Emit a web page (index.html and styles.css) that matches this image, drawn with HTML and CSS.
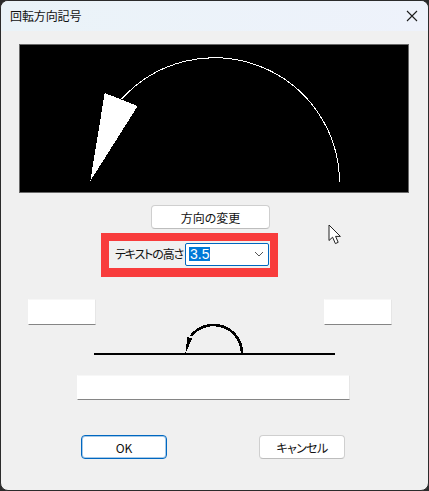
FILE: index.html
```html
<!DOCTYPE html>
<html lang="ja">
<head>
<meta charset="utf-8">
<title>回転方向記号</title>
<link rel="stylesheet" href="styles.css">
</head>
<body>
<div class="window">
  <header class="titlebar">
    <span class="title">回転方向記号</span>
    <svg class="close" width="12" height="12" viewBox="0 0 12 12"><path d="M1 1 L11 11 M11 1 L1 11" stroke="#1c1c1c" stroke-width="1.1" fill="none"/></svg>
  </header>
  <div class="canvas">
    <svg width="388" height="147" viewBox="20 45 388 147" shape-rendering="crispEdges">
      <path d="M339.5 182.5 A125 125 0 0 0 121.7 99" fill="none" stroke="#fff" stroke-width="1"/>
      <polygon points="104.7,93 137.7,106 90.3,181" fill="#fff"/>
    </svg>
  </div>
  <button class="btn change">方向の変更</button>
  <div class="height-row">
    <span class="label">テキストの高さ</span>
    <div class="select">
      <span class="selected">3.5</span>
      <svg class="chevron" width="10" height="6" viewBox="0 0 10 6"><path d="M1 1 L5 5 L9 1" fill="none" stroke="#555" stroke-width="1"/></svg>
    </div>
  </div>
  <div class="inputs">
    <div class="field small"></div>
    <div class="field small"></div>
  </div>
  <svg class="preview" width="241" height="33" viewBox="94 323 241 33" shape-rendering="crispEdges">
    <path d="M94 354 H335" stroke="#000" stroke-width="2" fill="none"/>
    <path d="M242 354 V353.5 A28.5 28.5 0 0 0 191 336" stroke="#000" stroke-width="2.6" fill="none"/>
    <polygon points="185.3,353.5 187.3,337 192.3,338.3" fill="#000"/>
  </svg>
  <div class="field wide"></div>
  <div class="actions">
    <button class="btn action default">OK</button>
    <button class="btn action cancel">キャンセル</button>
  </div>
  <svg class="cursor" width="14" height="22" viewBox="0 0 14 22"><path d="M1 1 V16.5 L4.6 13.2 L7.4 19.6 L10.2 18.3 L7.6 12.4 L12.4 12.4 Z" fill="#fff" stroke="#222" stroke-width="1" stroke-linejoin="miter"/></svg>
</div>
</body>
</html>
```

FILE: styles.css
```css
* {
  box-sizing: border-box;
}

html,
body {
  margin: 0;
  padding: 0;
  background: #2b2b2b;
}

body {
  width: 429px;
  height: 491px;
  overflow: hidden;
  font-family: "Noto Sans CJK JP", "Noto Sans", sans-serif;
  font-size: 12px;
  font-feature-settings: "palt";
  color: #111;
}

.window {
  position: relative;
  display: flex;
  flex-direction: column;
  align-items: flex-start;
  width: 429px;
  height: 491px;
  background: #f0f0f0;
  border: 1px solid #2b2b2b;
  border-radius: 8px;
  overflow: hidden;
}

.titlebar {
  display: flex;
  align-items: center;
  justify-content: space-between;
  width: 100%;
  height: 30px;
  flex: none;
  padding: 0 10px 0 9px;
  background: linear-gradient(90deg, #eaf3f8, #eef2fb);
}

.title {
  font-size: 12px;
  line-height: 16px;
  letter-spacing: -0.1px;
}

.close {
  display: block;
}

.canvas {
  width: 390px;
  height: 149px;
  margin: 13px 0 0 18px;
  flex: none;
  background: #000;
  border: 1px solid #696969;
}

.canvas svg {
  display: block;
}

.btn {
  display: block;
  flex: none;
  padding: 0;
  font: inherit;
  color: #111;
  background: #fff;
  border: 1px solid #cfcfcf;
  border-bottom-color: #bdbdbd;
  border-radius: 4px;
}

.change {
  width: 119px;
  height: 24px;
  margin: 12px 0 0 150px;
}

.height-row {
  display: flex;
  align-items: center;
  justify-content: space-between;
  width: 177px;
  height: 44px;
  margin: 4px 0 0 100px;
  flex: none;
  padding: 0 1px 1px 6px;
  background: #f0f0f0;
  border: 8px solid #f83c3c;
  border-bottom-width: 9px;
}

.label {
  line-height: 16px;
  letter-spacing: -1.15px;
  white-space: nowrap;
}

.select {
  display: flex;
  align-items: center;
  justify-content: space-between;
  width: 84px;
  height: 23px;
  flex: none;
  padding: 0 4px 0 3px;
  background: #fff;
  border: 1px solid #0067c0;
  border-radius: 2px;
}

.selected {
  padding: 0 1px;
  font-family: "Liberation Sans", sans-serif;
  font-size: 14px;
  line-height: 14px;
  color: #fff;
  background: #0078d7;
}

.chevron {
  display: block;
}

.inputs {
  display: flex;
  justify-content: space-between;
  width: 364px;
  margin: 22px 0 0 27px;
  flex: none;
}

.field {
  flex: none;
  background: #fff;
  border: 1px solid #fff;
  border-top-color: #f7f7f7;
  border-right-color: #e6e6e6;
  border-bottom-color: #858585;
}

.small {
  width: 68px;
  height: 26px;
}

.preview {
  display: block;
  flex: none;
  margin: -2px 0 0 93px;
}

.wide {
  width: 273px;
  height: 25px;
  margin: 19px 0 0 76px;
}

.actions {
  display: flex;
  justify-content: space-between;
  width: 264px;
  margin: 35px 0 0 80px;
  flex: none;
}

.action {
  width: 86px;
  height: 24px;
}

.cancel {
  letter-spacing: -0.6px;
}

.default {
  border: 1px solid #0067c0;
  box-shadow: inset 0 0 0 1px rgba(0, 103, 192, 0.35);
}

.cursor {
  position: absolute;
  left: 327px;
  top: 223px;
}
```
